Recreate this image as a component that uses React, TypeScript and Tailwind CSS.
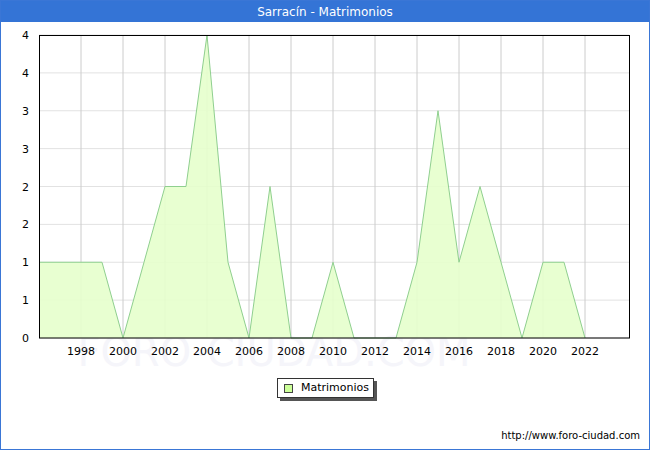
export default function App() {
  const data = [1,1,1,1,0,1,2,2,4,1,0,2,0,0,1,0,0,0,1,3,1,2,1,0,1,1,0];
  const x = (i: number) => 40 + i * 21;
  const y = (v: number) => 338 - v * 75.75;
  const pts = data.map((v, i) => `${x(i)},${y(v)}`).join(" ");
  const fillPts = `${x(0)},338 ${pts} ${x(data.length - 1)},338`;
  const ylabels = ["0","1","1","2","2","3","3","4","4"];
  const years = [1998,2000,2002,2004,2006,2008,2010,2012,2014,2016,2018,2020,2022];
  return (
    <div className="relative w-[650px] h-[450px] bg-white border border-[#3a76d6] overflow-hidden" style={{ fontFamily: '"DejaVu Sans", sans-serif' }}>
      <div className="h-[21px] bg-[#3474d6] text-white text-[12px] flex items-center justify-center">Sarracín - Matrimonios</div>
      <svg width="650" height="345" viewBox="1 22 650 345" className="block -ml-px">
        <text x="275" y="366" fontSize="40" fill="#f5f5fa" textAnchor="middle" fontFamily="DejaVu Sans">FORO-CIUDAD.COM</text>
        {ylabels.map((l, i) => {
          const yy = 338 - i * 37.875;
          return (
            <g key={i}>
              <line x1="40" x2="630" y1={yy} y2={yy} stroke="#e2e2e2" />
              <text x="30" y={yy + 4} fontSize="11" textAnchor="end" fill="#000">{l}</text>
            </g>
          );
        })}
        {years.map((yr) => {
          const xx = 40 + (yr - 1996) * 21;
          return (
            <g key={yr}>
              <line x1={xx} x2={xx} y1="35" y2="338" stroke="#cccccc" />
              <text x={xx} y="355" fontSize="11" textAnchor="middle" fill="#000">{yr}</text>
            </g>
          );
        })}
        <polygon points={fillPts} fill="#e6ffcc" opacity="0.9" />
        <polyline points={pts} fill="none" stroke="#8fcf8f" strokeWidth="1" />
        <rect x="40.5" y="35.5" width="590" height="302.5" fill="none" stroke="#000" />
      </svg>
      <div className="absolute left-[276px] top-[377px] w-[97px] h-[20px] bg-white border border-[#333] shadow-[3px_3px_0_#555] flex items-center text-[11px]">
        <span className="ml-[6px] w-[9px] h-[9px] bg-[#ccff99] border border-[#444]" />
        <span className="ml-[8px]">Matrimonios</span>
      </div>
      <div className="absolute right-[9px] top-[427px] text-[10px]">http://www.foro-ciudad.com</div>
    </div>
  );
}
